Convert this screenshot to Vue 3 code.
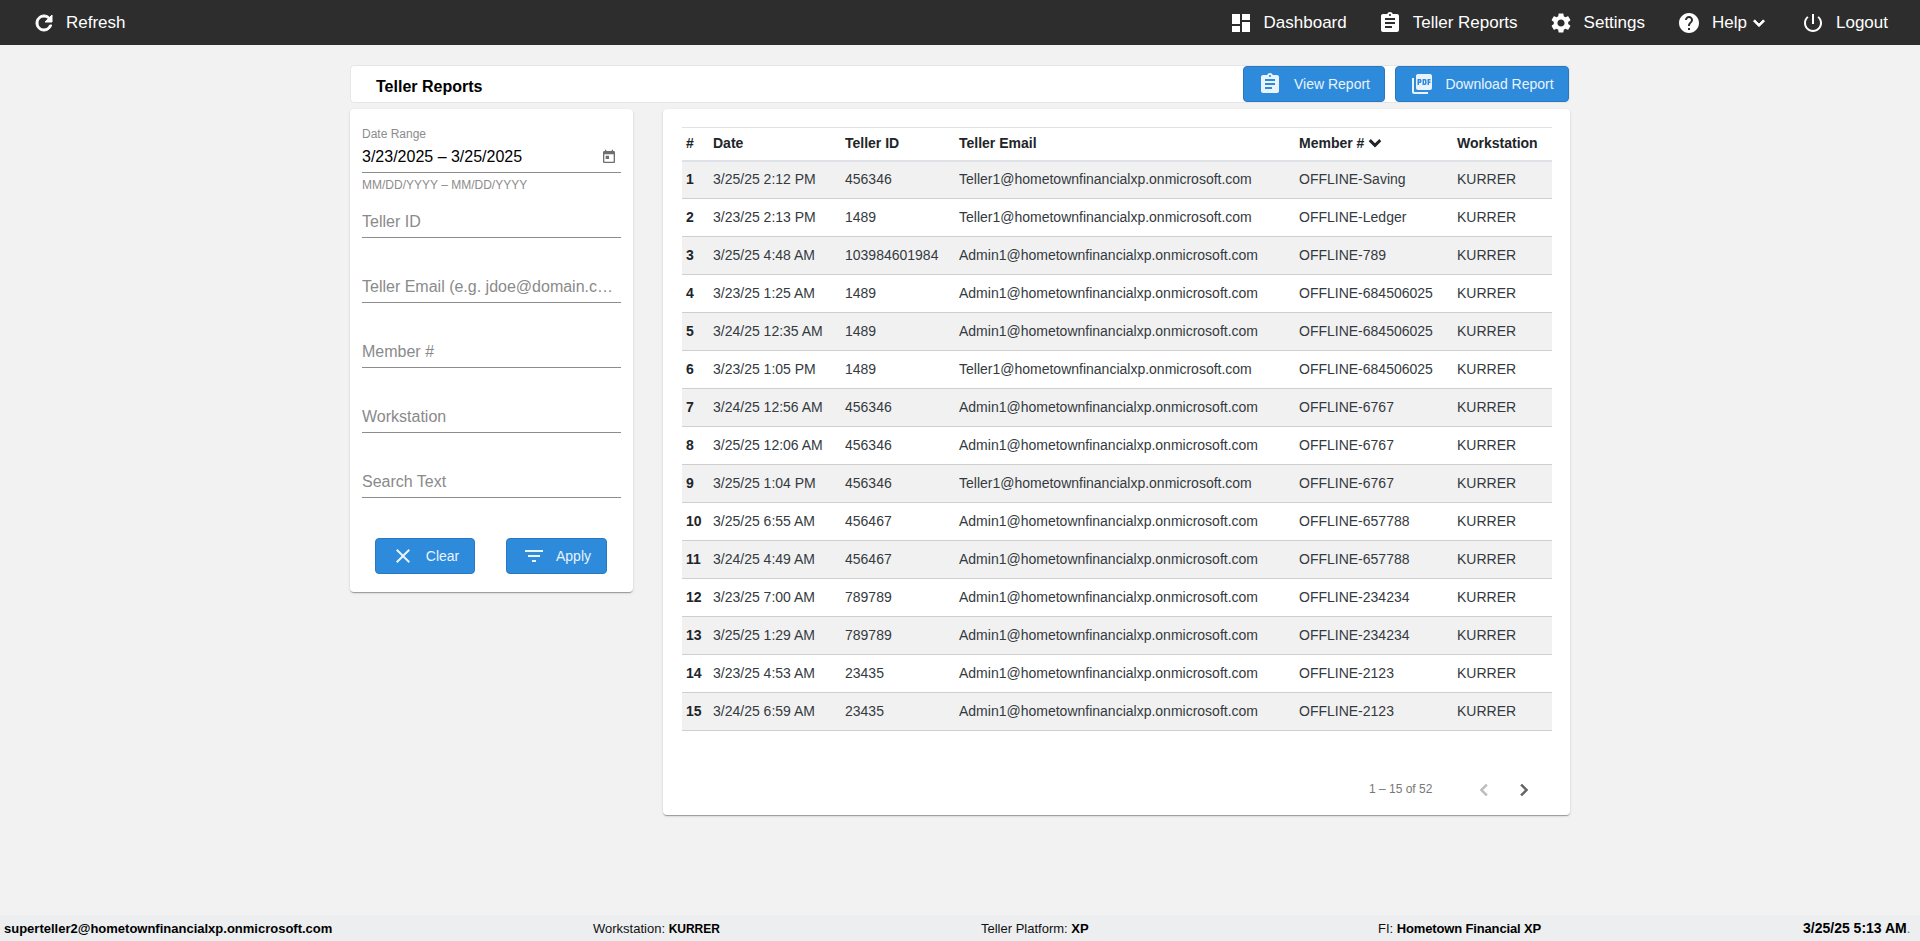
<template>
  <div class="page">
    <header class="topbar">
      <a class="nav-item refresh">
        <svg class="nav-icon" viewBox="0 0 24 24"><path :d="icons.refresh" /></svg>
        <span>Refresh</span>
      </a>
      <nav class="nav">
        <a class="nav-item" v-for="item in navItems" :key="item.label">
          <svg class="nav-icon" viewBox="0 0 24 24"><path :d="icons[item.icon]" /></svg>
          <span>{{ item.label }}</span>
          <svg v-if="item.caret" class="caret" viewBox="0 0 24 24"><path :d="icons.expand" /></svg>
        </a>
      </nav>
    </header>

    <main class="content">
      <div class="titlebar">
        <h1>Teller Reports</h1>
        <div class="title-actions">
          <button class="btn view-btn">
            <svg viewBox="0 0 24 24"><path :d="icons.assignment" /></svg>
            View Report
          </button>
          <button class="btn download-btn">
            <svg viewBox="0 0 24 24"><path :d="icons.pdf" /></svg>
            Download Report
          </button>
        </div>
      </div>

      <div class="columns">
        <aside class="card filters">
          <div class="date-field">
            <label>Date Range</label>
            <div class="date-value">
              <span>3/23/2025 – 3/25/2025</span>
              <svg viewBox="0 0 24 24"><path :d="icons.calendar" /></svg>
            </div>
            <div class="hint">MM/DD/YYYY – MM/DD/YYYY</div>
          </div>
          <div class="field" v-for="f in fields" :key="f">
            <input type="text" :placeholder="f" />
          </div>
          <div class="filter-actions">
            <button class="btn clear-btn">
              <svg viewBox="0 0 24 24"><path :d="icons.close" /></svg>
              Clear
            </button>
            <button class="btn apply-btn">
              <svg viewBox="0 0 24 24"><path :d="icons.filter" /></svg>
              Apply
            </button>
          </div>
        </aside>

        <section class="card results">
          <table>
            <colgroup>
              <col style="width: 27px" />
              <col style="width: 132px" />
              <col style="width: 114px" />
              <col style="width: 340px" />
              <col style="width: 158px" />
              <col style="width: 99px" />
            </colgroup>
            <thead>
              <tr>
                <th>#</th>
                <th>Date</th>
                <th>Teller ID</th>
                <th>Teller Email</th>
                <th>
                  <span class="sort-head">
                    Member #
                    <svg class="sort" viewBox="0 0 24 24"><path :d="icons.expand" /></svg>
                  </span>
                </th>
                <th>Workstation</th>
              </tr>
            </thead>
            <tbody>
              <tr v-for="(r, i) in rows" :key="i">
                <td class="num">{{ i + 1 }}</td>
                <td>{{ r[0] }}</td>
                <td>{{ r[1] }}</td>
                <td>{{ r[2] }}@hometownfinancialxp.onmicrosoft.com</td>
                <td>OFFLINE-{{ r[3] }}</td>
                <td>KURRER</td>
              </tr>
            </tbody>
          </table>
          <div class="pager">
            <span class="range">1 – 15 of 52</span>
            <svg class="prev" viewBox="0 0 24 24"><path :d="icons.left" /></svg>
            <svg class="next" viewBox="0 0 24 24"><path :d="icons.right" /></svg>
          </div>
        </section>
      </div>
    </main>

    <footer class="statusbar">
      <b>superteller2@hometownfinancialxp.onmicrosoft.com</b>
      <span>Workstation: <b class="station">KURRER</b></span>
      <span>Teller Platform: <b>XP</b></span>
      <span>FI: <b class="fi-name">Hometown Financial XP</b></span>
      <span class="clock"><b>3/25/25 5:13 AM</b><i>.</i></span>
    </footer>
  </div>
</template>

<script setup>
const icons = {
  refresh: 'M17.65 6.35C16.2 4.9 14.21 4 12 4c-4.42 0-7.99 3.58-7.99 8s3.57 8 7.99 8c3.73 0 6.84-2.55 7.73-6h-2.08c-.82 2.33-3.04 4-5.65 4-3.31 0-6-2.69-6-6s2.69-6 6-6c1.66 0 3.14.69 4.22 1.78L13 11h7V4l-2.35 2.35z',
  dashboard: 'M3 13h8V3H3v10zm0 8h8v-6H3v6zm10 0h8V11h-8v10zm0-18v6h8V3h-8z',
  assignment: 'M19 3h-4.18C14.4 1.84 13.3 1 12 1c-1.3 0-2.4.84-2.82 2H5c-1.1 0-2 .9-2 2v14c0 1.1.9 2 2 2h14c1.1 0 2-.9 2-2V5c0-1.1-.9-2-2-2zm-7 0c.55 0 1 .45 1 1s-.45 1-1 1-1-.45-1-1 .45-1 1-1zm2 14H7v-2h7v2zm3-4H7v-2h10v2zm0-4H7V7h10v2z',
  settings: 'M19.14 12.94c.04-.3.06-.61.06-.94 0-.32-.02-.64-.07-.94l2.03-1.58c.18-.14.23-.41.12-.61l-1.92-3.32c-.12-.22-.37-.29-.59-.22l-2.39.96c-.5-.38-1.03-.7-1.62-.94l-.36-2.54c-.04-.24-.24-.41-.48-.41h-3.84c-.24 0-.43.17-.47.41l-.36 2.54c-.59.24-1.13.57-1.62.94l-2.39-.96c-.22-.08-.47 0-.59.22L2.74 8.87c-.12.21-.08.47.12.61l2.03 1.58c-.05.3-.09.63-.09.94s.02.64.07.94l-2.03 1.58c-.18.14-.23.41-.12.61l1.92 3.32c.12.22.37.29.59.22l2.39-.96c.5.38 1.03.7 1.62.94l.36 2.54c.05.24.24.41.48.41h3.84c.24 0 .44-.17.47-.41l.36-2.54c.59-.24 1.13-.56 1.62-.94l2.39.96c.22.08.47 0 .59-.22l1.92-3.32c.12-.22.07-.47-.12-.61l-2.01-1.58zM12 15.6c-1.98 0-3.6-1.62-3.6-3.6s1.62-3.6 3.6-3.6 3.6 1.62 3.6 3.6-1.62 3.6-3.6 3.6z',
  help: 'M12 2C6.48 2 2 6.48 2 12s4.48 10 10 10 10-4.48 10-10S17.52 2 12 2zm1 17h-2v-2h2v2zm2.07-7.75l-.9.92C13.45 12.9 13 13.5 13 15h-2v-.5c0-1.1.45-2.1 1.17-2.83l1.24-1.26c.37-.36.59-.86.59-1.41 0-1.1-.9-2-2-2s-2 .9-2 2H8c0-2.21 1.79-4 4-4s4 1.79 4 4c0 .88-.36 1.68-.93 2.25z',
  power: 'M13 3h-2v10h2V3zm4.83 2.17l-1.42 1.42C17.99 7.86 19 9.81 19 12c0 3.87-3.13 7-7 7s-7-3.13-7-7c0-2.19 1.01-4.14 2.58-5.42L6.17 5.17C4.23 6.82 3 9.26 3 12c0 4.97 4.03 9 9 9s9-4.03 9-9c0-2.74-1.23-5.18-3.17-6.83z',
  pdf: 'M20 2H8c-1.1 0-2 .9-2 2v12c0 1.1.9 2 2 2h12c1.1 0 2-.9 2-2V4c0-1.1-.9-2-2-2zm-8.5 7.5c0 .83-.67 1.5-1.5 1.5H9v2H7.5V7H10c.83 0 1.5.67 1.5 1.5v1zm5 2c0 .83-.67 1.5-1.5 1.5h-2.5V7H15c.83 0 1.5.67 1.5 1.5v3zm4-3H19v1h1.5V11H19v2h-1.5V7h3v1.5zM9 9.5h1v-1H9v1zM4 6H2v14c0 1.1.9 2 2 2h14v-2H4V6zm10 5.5h1v-3h-1v3z',
  calendar: 'M19 3h-1V1h-2v2H8V1H6v2H5c-1.11 0-1.99.9-1.99 2L3 19c0 1.1.89 2 2 2h14c1.1 0 2-.9 2-2V5c0-1.1-.9-2-2-2zm0 16H5V8h14v11zM7 10h5v5H7z',
  close: 'M19 6.41L17.59 5 12 10.59 6.41 5 5 6.41 10.59 12 5 17.59 6.41 19 12 13.41 17.59 19 19 17.59 13.41 12z',
  filter: 'M10 18h4v-2h-4v2zM3 6v2h18V6H3zm3 7h12v-2H6v2z',
  expand: 'M16.59 8.59L12 13.17 7.41 8.59 6 10l6 6 6-6z',
  left: 'M15.41 16.59L10.83 12l4.58-4.59L14 6l-6 6 6 6 1.41-1.41z',
  right: 'M8.59 16.59L13.17 12 8.59 7.41 10 6l6 6-6 6-1.41-1.41z'
}

const navItems = [
  { label: 'Dashboard', icon: 'dashboard' },
  { label: 'Teller Reports', icon: 'assignment' },
  { label: 'Settings', icon: 'settings' },
  { label: 'Help', icon: 'help', caret: true },
  { label: 'Logout', icon: 'power' }
]

const fields = ['Teller ID', 'Teller Email (e.g. jdoe@domain.com)', 'Member #', 'Workstation', 'Search Text']

const rows = [
  ['3/25/25 2:12 PM', '456346', 'Teller1', 'Saving'],
  ['3/23/25 2:13 PM', '1489', 'Teller1', 'Ledger'],
  ['3/25/25 4:48 AM', '103984601984', 'Admin1', '789'],
  ['3/23/25 1:25 AM', '1489', 'Admin1', '684506025'],
  ['3/24/25 12:35 AM', '1489', 'Admin1', '684506025'],
  ['3/23/25 1:05 PM', '1489', 'Teller1', '684506025'],
  ['3/24/25 12:56 AM', '456346', 'Admin1', '6767'],
  ['3/25/25 12:06 AM', '456346', 'Admin1', '6767'],
  ['3/25/25 1:04 PM', '456346', 'Teller1', '6767'],
  ['3/25/25 6:55 AM', '456467', 'Admin1', '657788'],
  ['3/24/25 4:49 AM', '456467', 'Admin1', '657788'],
  ['3/23/25 7:00 AM', '789789', 'Admin1', '234234'],
  ['3/25/25 1:29 AM', '789789', 'Admin1', '234234'],
  ['3/23/25 4:53 AM', '23435', 'Admin1', '2123'],
  ['3/24/25 6:59 AM', '23435', 'Admin1', '2123']
]
</script>

<style scoped>
.page {
  height: 941px;
  display: flex;
  flex-direction: column;
  background: #f2f2f2;
  font-family: "Liberation Sans", Arial, sans-serif;
  color: #212529;
  overflow: hidden;
}

.topbar {
  height: 45px;
  flex: none;
  background: #2d2d2d;
  display: flex;
  align-items: center;
  justify-content: space-between;
  padding: 0 32px;
}
.nav {
  display: flex;
  align-items: center;
  gap: 31px;
}
.nav-item {
  display: flex;
  align-items: center;
  gap: 11px;
  color: #fff;
  font-size: 17px;
  white-space: nowrap;
}
.nav-item:nth-child(4) {
  margin-left: 1px;
}
.nav-icon {
  width: 24px;
  height: 24px;
  fill: #fff;
  flex: none;
}
.refresh {
  gap: 10px;
}
.refresh .nav-icon {
  stroke: #fff;
  stroke-width: 1;
}
.caret {
  width: 22px;
  height: 22px;
  fill: #fff;
  stroke: #fff;
  stroke-width: 1;
  margin-left: -10px;
}

.content {
  flex: 1;
  width: 1220px;
  margin: 0 auto;
  padding-top: 20px;
}
.titlebar {
  height: 38px;
  box-sizing: border-box;
  background: #fff;
  border: 1px solid #e6e6e6;
  border-radius: 4px;
  display: flex;
  align-items: center;
  justify-content: space-between;
  padding: 0 0 0 25px;
}
.titlebar h1 {
  margin: 5px 0 0;
  font-size: 16px;
  font-weight: 700;
  color: #000;
}
.title-actions {
  display: flex;
  gap: 10px;
}
.btn {
  height: 36px;
  display: flex;
  align-items: center;
  justify-content: center;
  box-sizing: border-box;
  border: 1px solid #2979c2;
  border-radius: 4px;
  background: #2e8bdc;
  color: #e9f3fb;
  font-family: inherit;
  font-size: 14px;
  padding: 0;
}
.btn svg {
  fill: #e9f3fb;
  flex: none;
}
.view-btn {
  width: 142px;
  gap: 12px;
}
.view-btn svg,
.download-btn svg {
  width: 24px;
  height: 24px;
}
.download-btn {
  width: 174px;
  gap: 11px;
}

.columns {
  display: flex;
  align-items: flex-start;
  gap: 30px;
  margin-top: 6px;
}
.card {
  background: #fff;
  border-radius: 4px;
  box-shadow: 0 2px 1px -1px rgba(0, 0, 0, 0.2), 0 1px 1px 0 rgba(0, 0, 0, 0.14), 0 1px 3px 0 rgba(0, 0, 0, 0.12);
  box-sizing: border-box;
}

.filters {
  width: 283px;
  height: 483px;
  padding: 18px 12px 0;
  flex: none;
}
.date-field {
  height: 46px;
}
.date-field label {
  display: block;
  font-size: 12px;
  line-height: 14px;
  color: #8c8c8c;
}
.date-value {
  display: flex;
  align-items: center;
  justify-content: space-between;
  height: 32px;
  border-bottom: 1px solid #8c8c8c;
  box-sizing: border-box;
  font-size: 16px;
  color: #000;
  padding: 1px 4px 0 0;
}
.date-value svg {
  width: 16px;
  height: 16px;
  fill: #6e6e6e;
}
.hint {
  font-size: 12px;
  color: #8c8c8c;
  line-height: 14px;
  margin-top: 5px;
}
.field {
  height: 65px;
  display: flex;
  flex-direction: column;
  justify-content: flex-end;
}
.field input {
  display: block;
  width: 100%;
  height: 33px;
  box-sizing: border-box;
  border: 0;
  border-bottom: 1px solid #8c8c8c;
  outline: 0;
  padding: 2px 0 0;
  font-family: inherit;
  font-size: 16px;
  text-overflow: ellipsis;
  background: transparent;
}
.field input::placeholder {
  color: #8a8a8a;
  opacity: 1;
}
.filter-actions {
  display: flex;
  justify-content: space-between;
  padding: 0 14px 0 13px;
  margin-top: 40px;
}
.clear-btn {
  width: 100px;
  gap: 11px;
}
.clear-btn svg {
  width: 24px;
  height: 24px;
}
.apply-btn {
  width: 101px;
  gap: 10px;
}
.apply-btn svg {
  width: 24px;
  height: 24px;
}

.results {
  width: 907px;
  height: 706px;
  padding: 18px 19px 0;
  flex: none;
}
table {
  width: 870px;
  border-collapse: collapse;
  table-layout: fixed;
  font-size: 14px;
}
th {
  height: 33px;
  box-sizing: border-box;
  padding: 0 4px 2px;
  text-align: left;
  font-weight: 700;
  color: #212529;
  border-top: 1px solid #dee2e6;
  border-bottom: 2px solid #dee2e6;
  white-space: nowrap;
}
.sort-head {
  display: inline-flex;
  align-items: center;
  height: 16px;
}
.sort {
  width: 22px;
  height: 22px;
  fill: #212529;
  stroke: #212529;
  stroke-width: 1.2;
  margin-left: 0;
}
td {
  height: 38px;
  box-sizing: border-box;
  padding: 0 4px 2px;
  border-bottom: 1px solid #cfcfcf;
  white-space: nowrap;
  color: #343a40;
}
tbody tr:nth-child(odd) td {
  background: #f1f1f1;
}
.num {
  font-weight: 700;
  color: #212529;
}

.pager {
  display: flex;
  align-items: center;
  height: 24px;
  margin-top: 47px;
}
.range {
  margin-left: 687px;
  margin-top: -2px;
  font-size: 12px;
  color: #777;
}
.pager svg {
  width: 24px;
  height: 24px;
  flex: none;
  stroke-width: 0.6;
}
.prev {
  margin-left: 40px;
  fill: #bdbdbd;
  stroke: #bdbdbd;
}
.next {
  margin-left: 16px;
  fill: #666;
  stroke: #666;
}

.statusbar {
  height: 26px;
  flex: none;
  background: #eceef0;
  display: grid;
  grid-template-columns: 589px 388px 397px 425px 1fr;
  align-items: center;
  padding: 0 4px;
  font-size: 13px;
  color: #111;
}
.statusbar b {
  color: #000;
}
.statusbar .station {
  font-size: 12px;
}
.statusbar .fi-name {
  letter-spacing: -0.15px;
}
.clock {
  text-align: right;
  white-space: nowrap;
  font-size: 14px;
  margin-right: 7px;
}
.clock i {
  font-style: normal;
  font-size: 13px;
  color: #666;
}
</style>

<style>
body {
  background: #f2f2f2;
}
</style>
